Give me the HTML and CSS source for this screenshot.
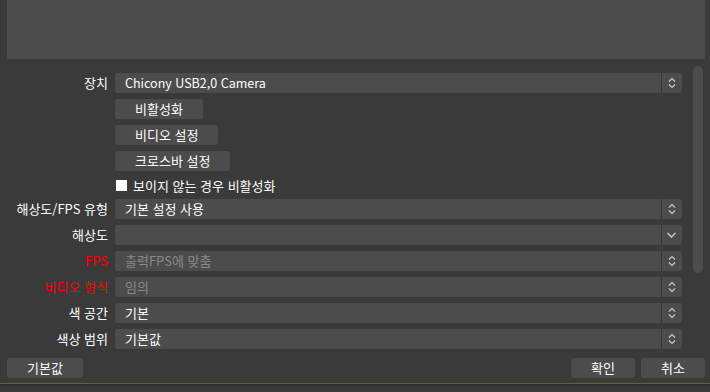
FILE: index.html
```html
<!DOCTYPE html>
<html lang="ko">
<head>
<meta charset="utf-8">
<link rel="stylesheet" href="styles.css">
</head>
<body>
<div class="preview"></div>
<div class="content">
  <div class="form">
    <div class="label">장치</div>
    <div class="combo"><span class="val latin">Chicony USB2,0 Camera</span><span class="arrow"><svg width="20" height="20" viewBox="0 0 20 20"><polyline points="7,8.5 10,5.5 13,8.5"/><polyline points="7,11.5 10,14.5 13,11.5"/></svg></span></div>

    <div class="label"></div>
    <div class="field"><button class="btn">비활성화</button></div>

    <div class="label"></div>
    <div class="field"><button class="btn">비디오 설정</button></div>

    <div class="label"></div>
    <div class="field"><button class="btn">크로스바 설정</button></div>

    <div class="label short"></div>
    <div class="check"><span class="box"></span><span>보이지 않는 경우 비활성화</span></div>

    <div class="label">해상도/FPS 유형</div>
    <div class="combo"><span class="val">기본 설정 사용</span><span class="arrow"><svg width="20" height="20" viewBox="0 0 20 20"><polyline points="7,8.5 10,5.5 13,8.5"/><polyline points="7,11.5 10,14.5 13,11.5"/></svg></span></div>

    <div class="label">해상도</div>
    <div class="combo"><span class="val"></span><span class="arrow"><svg width="20" height="20" viewBox="0 0 20 20"><polyline class="big" points="5.5,8 9.5,12 13.5,8"/></svg></span></div>

    <div class="label red">FPS</div>
    <div class="combo"><span class="val dis">출력FPS에 맞춤</span><span class="arrow"><svg width="20" height="20" viewBox="0 0 20 20"><polyline points="7,8.5 10,5.5 13,8.5"/><polyline points="7,11.5 10,14.5 13,11.5"/></svg></span></div>

    <div class="label red">비디오 형식</div>
    <div class="combo"><span class="val dis">임의</span><span class="arrow"><svg width="20" height="20" viewBox="0 0 20 20"><polyline points="7,8.5 10,5.5 13,8.5"/><polyline points="7,11.5 10,14.5 13,11.5"/></svg></span></div>

    <div class="label">색 공간</div>
    <div class="combo"><span class="val">기본</span><span class="arrow"><svg width="20" height="20" viewBox="0 0 20 20"><polyline points="7,8.5 10,5.5 13,8.5"/><polyline points="7,11.5 10,14.5 13,11.5"/></svg></span></div>

    <div class="label">색상 범위</div>
    <div class="combo"><span class="val">기본값</span><span class="arrow"><svg width="20" height="20" viewBox="0 0 20 20"><polyline points="7,8.5 10,5.5 13,8.5"/><polyline points="7,11.5 10,14.5 13,11.5"/></svg></span></div>
  </div>
  <div class="scrollbar"></div>
</div>
<div class="footer">
  <button class="btn fbtn wide">기본값</button>
  <div class="spacer"></div>
  <button class="btn fbtn">확인</button>
  <button class="btn fbtn">취소</button>
</div>
<div class="bottomline"></div>
</body>
</html>
```
FILE: styles.css
```css
html, body {
  margin: 0;
  padding: 0;
}
body {
  width: 710px;
  height: 392px;
  overflow: hidden;
  background: #3a3a3a;
  color: #fefefe;
  font-family: "Noto Sans CJK KR", "Noto Sans", sans-serif;
  font-size: 13px;
}
.preview {
  height: 59px;
  margin: 0 5px 0 7px;
  background: #4c4c4c;
}
.content {
  display: flex;
  align-items: flex-start;
  padding-top: 7px;
  height: 286px;
}
.form {
  width: 682px;
  padding-top: 7px;
  display: grid;
  grid-template-columns: 108px 567px;
  column-gap: 7px;
  row-gap: 6px;
}
.label {
  height: 20px;
  line-height: 20px;
  text-align: right;
  white-space: nowrap;
}
.label.short {
  height: 16px;
}
.red {
  color: #ff0000;
}
.combo {
  height: 20px;
  display: flex;
  background: #4c4c4c;
  border-radius: 3px;
  overflow: hidden;
}
.val {
  flex: 1;
  line-height: 20px;
  padding-left: 10px;
  white-space: nowrap;
}
.val.latin {
  font-size: 12.5px;
}
.dis {
  color: #8a8a8a;
}
.arrow {
  width: 20px;
  height: 20px;
  border-left: 1px solid #373737;
}
.arrow svg {
  display: block;
}
.arrow polyline {
  fill: none;
  stroke: #c9c9c9;
  stroke-width: 1.2;
}
.arrow polyline.big {
  stroke-width: 1.5;
}
.field {
  height: 20px;
  display: flex;
}
.btn {
  height: 20px;
  padding: 0 20px;
  border: none;
  border-radius: 3px;
  background: #4c4c4c;
  color: #fefefe;
  font-family: "Noto Sans CJK KR", "Noto Sans", sans-serif;
  font-size: 13px;
  line-height: 20px;
  margin: 0;
}
.check {
  height: 16px;
  display: flex;
  align-items: center;
  gap: 6px;
  white-space: nowrap;
}
.box {
  width: 11px;
  height: 11px;
  background: #ffffff;
  margin-left: 1px;
}
.scrollbar {
  width: 10px;
  height: 207px;
  margin-left: 11px;
  background: #4c4c4c;
  border-radius: 5px;
}
.footer {
  display: flex;
  padding: 6px 5px 0 7px;
  gap: 6px;
  height: 31px;
  box-sizing: border-box;
  align-items: flex-start;
}
.spacer {
  flex: 1;
}
.fbtn {
  width: 64px;
  padding: 0;
  text-align: center;
}
.fbtn.wide {
  width: 76px;
}
.bottomline {
  height: 2px;
  border-top: 1px solid #7a5c2c;
  background: #2e2e2e;
}
```
